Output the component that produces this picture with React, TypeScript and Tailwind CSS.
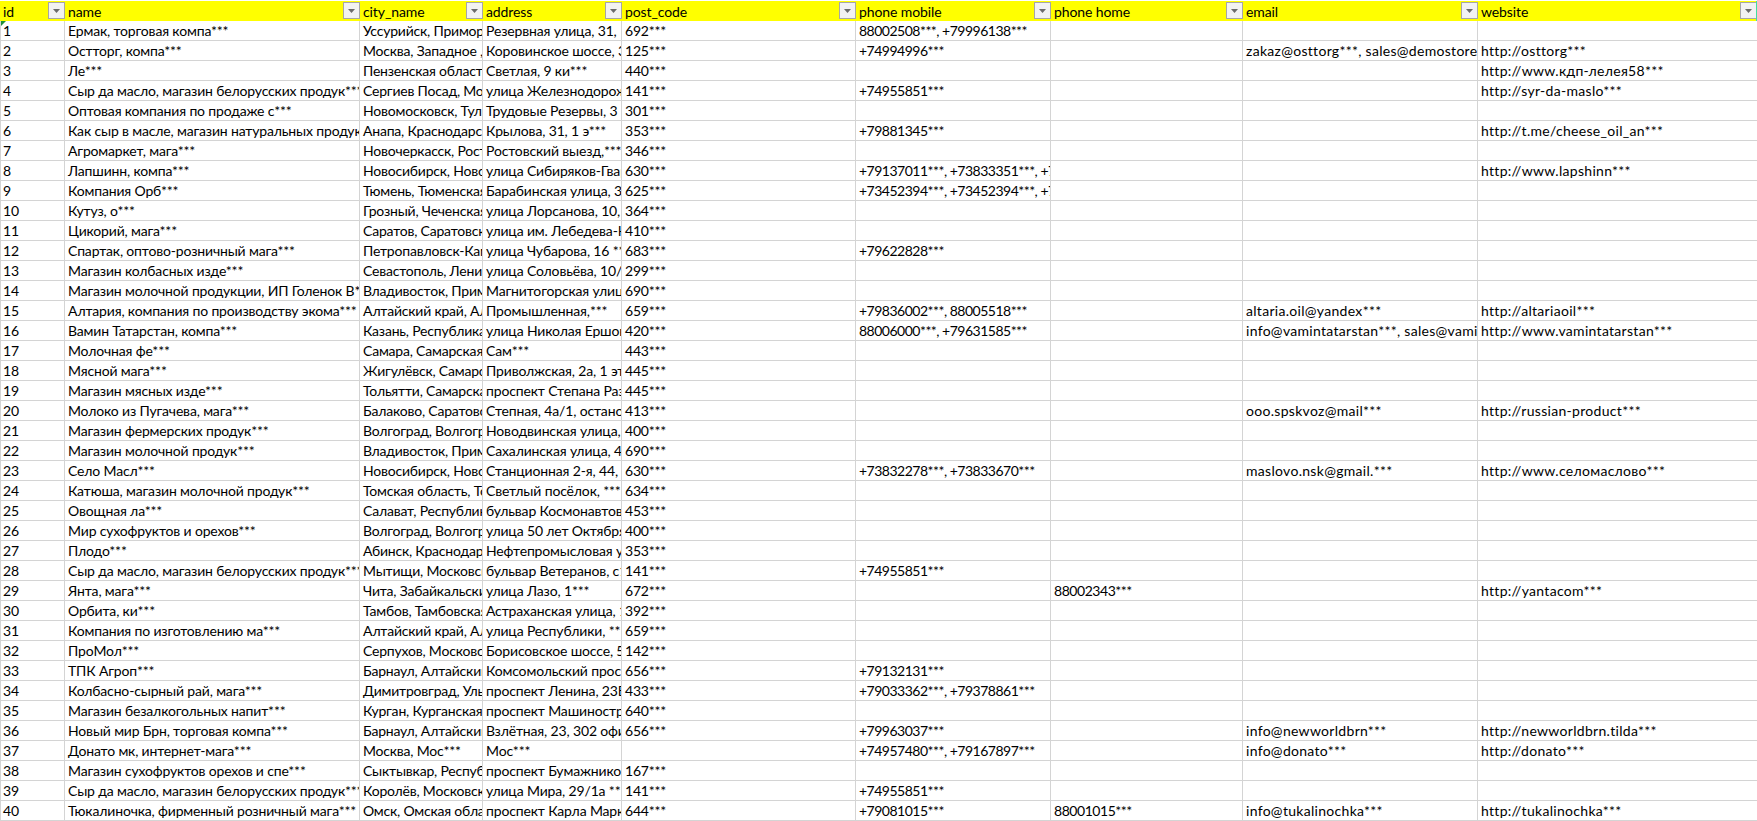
const cols = "grid grid-cols-[65px_295px_123px_139px_234px_195px_192px_235px_279px]";

const headers = ["id","name","city_name","address","post_code","phone mobile","phone home","email","website"];

const rows: string[][] = [
["1","Ермак, торговая компа***","Уссурийск, Приморский край","Резервная улица, 31,","692***","88002508***, +79996138***","","",""],
["2","Остторг, компа***","Москва, Западное , административное","Коровинское шоссе, 35","125***","+74994996***","","zakaz@osttorg***, sales@demostore***","http://osttorg***"],
["3","Ле***","Пензенская область","Светлая, 9 ки***","440***","","","","http://www.кдп-лелея58***"],
["4","Сыр да масло, магазин белорусских продук***","Сергиев Посад, Московская","улица Железнодорожная","141***","+74955851***","","","http://syr-da-maslo***"],
["5","Оптовая компания по продаже с***","Новомосковск, Тульская","Трудовые Резервы, 3","301***","","","",""],
["6","Как сыр в масле, магазин натуральных продуктов","Анапа, Краснодарский","Крылова, 31, 1 э***","353***","+79881345***","","","http://t.me/cheese_oil_an***"],
["7","Агромаркет, мага***","Новочеркасск, Ростовская","Ростовский выезд,***","346***","","","",""],
["8","Лапшинн, компа***","Новосибирск, Новосибирская","улица Сибиряков-Гвардейцев","630***","+79137011***, +73833351***, +73833351","","","http://www.lapshinn***"],
["9","Компания Орб***","Тюмень, Тюменская область","Барабинская улица, 3","625***","+73452394***, +73452394***, +73452394","","",""],
["10","Кутуз, о***","Грозный, Чеченская","улица Лорсанова, 10,","364***","","","",""],
["11","Цикорий, мага***","Саратов, Саратовская","улица им. Лебедева-Кумача","410***","","","",""],
["12","Спартак, оптово-розничный мага***","Петропавловск-Камчатский","улица Чубарова, 16 ***","683***","+79622828***","","",""],
["13","Магазин колбасных изде***","Севастополь, Ленинский","улица Соловьёва, 10/1","299***","","","",""],
["14","Магазин молочной продукции, ИП Голенок В***","Владивосток, Приморский","Магнитогорская улица","690***","","","",""],
["15","Алтария, компания по производству экома***","Алтайский край, Алтайский","Промышленная,***","659***","+79836002***, 88005518***","","altaria.oil@yandex***","http://altariaoil***"],
["16","Вамин Татарстан, компа***","Казань, Республика Татарстан","улица Николая Ершова","420***","88006000***, +79631585***","","info@vamintatarstan***, sales@vamintatarstan","http://www.vamintatarstan***"],
["17","Молочная фе***","Самара, Самарская область","Сам***","443***","","","",""],
["18","Мясной мага***","Жигулёвск, Самарская","Приволжская, 2а, 1 этаж","445***","","","",""],
["19","Магазин мясных изде***","Тольятти, Самарская","проспект Степана Разина","445***","","","",""],
["20","Молоко из Пугачева, мага***","Балаково, Саратовская","Степная, 4а/1, остановка","413***","","","ooo.spskvoz@mail***","http://russian-product***"],
["21","Магазин фермерских продук***","Волгоград, Волгоградская","Новодвинская улица, 1","400***","","","",""],
["22","Магазин молочной продук***","Владивосток, Приморский","Сахалинская улица, 4","690***","","","",""],
["23","Село Масл***","Новосибирск, Новосибирская","Станционная 2-я, 44, 1","630***","+73832278***, +73833670***","","maslovo.nsk@gmail.***","http://www.селомаслово***"],
["24","Катюша, магазин молочной продук***","Томская область, Томский","Светлый посёлок, ***","634***","","","",""],
["25","Овощная ла***","Салават, Республика Башкортостан","бульвар Космонавтов, 1","453***","","","",""],
["26","Мир сухофруктов и орехов***","Волгоград, Волгоградская","улица 50 лет Октября, 1","400***","","","",""],
["27","Плодо***","Абинск, Краснодарский","Нефтепромысловая улица","353***","","","",""],
["28","Сыр да масло, магазин белорусских продук***","Мытищи, Московская","бульвар Ветеранов, с1","141***","+74955851***","","",""],
["29","Янта, мага***","Чита, Забайкальский край","улица Лазо, 1***","672***","","88002343***","","http://yantacom***"],
["30","Орбита, ки***","Тамбов, Тамбовская","Астраханская улица, 1","392***","","","",""],
["31","Компания по изготовлению ма***","Алтайский край, Алтайский","улица Республики, ***","659***","","","",""],
["32","ПроМол***","Серпухов, Московская","Борисовское шоссе, 5","142***","","","",""],
["33","ТПК Агроп***","Барнаул, Алтайский край","Комсомольский проспект","656***","+79132131***","","",""],
["34","Колбасно-сырный рай, мага***","Димитровград, Ульяновская","проспект Ленина, 23Б","433***","+79033362***, +79378861***","","",""],
["35","Магазин безалкогольных напит***","Курган, Курганская область","проспект Машиностроителей","640***","","","",""],
["36","Новый мир Брн, торговая компа***","Барнаул, Алтайский край","Взлётная, 23, 302 офис","656***","+79963037***","","info@newworldbrn***","http://newworldbrn.tilda***"],
["37","Донато мк, интернет-мага***","Москва, Мос***","Мос***","","+74957480***, +79167897***","","info@donato***","http://donato***"],
["38","Магазин сухофруктов орехов и спе***","Сыктывкар, Республика Коми","проспект Бумажников, 1","167***","","","",""],
["39","Сыр да масло, магазин белорусских продук***","Королёв, Московская","улица Мира, 29/1а ***","141***","+74955851***","","",""],
["40","Тюкалиночка, фирменный розничный мага***","Омск, Омская область","проспект Карла Маркса","644***","+79081015***","88001015***","info@tukalinochka***","http://tukalinochka***"],
];

const cellTone = [
  "pl-[2px] border-l tracking-[-0.2px]",
  "pl-[3px] tracking-[-0.16px]",
  "pl-[3px] tracking-[-0.2px]",
  "pl-[3px] tracking-[-0.15px]",
  "pl-[3px] tracking-[-0.2px]",
  "pl-[3px] tracking-[-0.5px]",
  "pl-[3px] tracking-[-0.45px]",
  "pl-[3px] tracking-[0.3px]",
  "pl-[3px] tracking-[0.3px] border-r-0",
];

function FilterButton() {
  return (
    <span className="absolute right-0 top-px flex h-[17px] w-[17px] items-center justify-center border border-[#a6a6a6] bg-[#f2f2f2]">
      <svg width="7" height="4" viewBox="0 0 7 4"><path d="M0 0h7L3.5 4z" fill="#6b6b6b" /></svg>
    </span>
  );
}

export default function App() {
  return (
    <div className="h-[821px] w-[1757px] overflow-hidden bg-white pt-px font-['Lato','Liberation_Sans',sans-serif] text-[14px] leading-[20px] text-black">
      <div className={`${cols} relative h-5 bg-[#ffff00]`}>
        {headers.map((h) => (
          <div key={h} className="relative h-5 whitespace-nowrap pl-[3px] pt-px tracking-[-0.1px]">
            {h}
            <FilterButton />
          </div>
        ))}
        <span className="absolute right-0 top-0 h-5 w-px bg-[#40e0a0]" />
      </div>
      {rows.map((r, i) => (
        <div key={r[0]} className={`${cols} relative h-5 border-b border-[#d4d4d4]`}>
          {i === 0 && (
            <span className="absolute left-px top-0 h-0 w-0 border-r-[5px] border-t-[5px] border-r-transparent border-t-[#1e8f3c]" />
          )}
          {r.map((c, j) => (
            <div key={j} className={`h-5 overflow-hidden whitespace-nowrap border-r border-[#d4d4d4] ${cellTone[j]}`}>
              {c}
            </div>
          ))}
        </div>
      ))}
    </div>
  );
}
